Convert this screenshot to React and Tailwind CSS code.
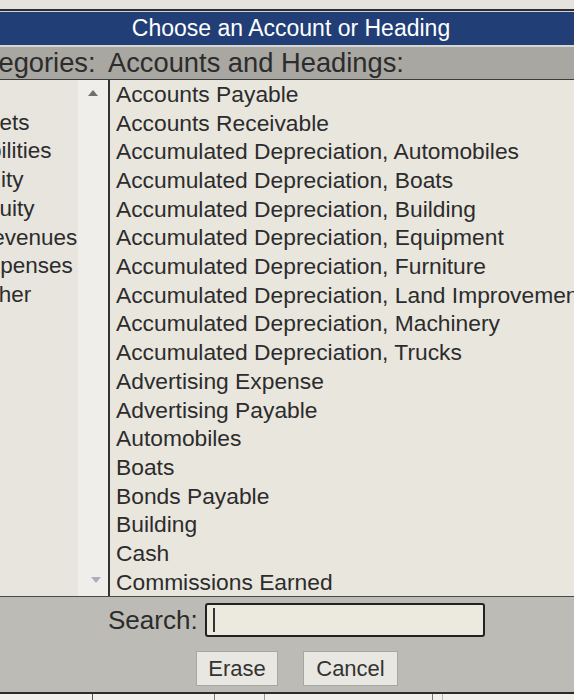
const accounts = [
  "Accounts Payable",
  "Accounts Receivable",
  "Accumulated Depreciation, Automobiles",
  "Accumulated Depreciation, Boats",
  "Accumulated Depreciation, Building",
  "Accumulated Depreciation, Equipment",
  "Accumulated Depreciation, Furniture",
  "Accumulated Depreciation, Land Improvements",
  "Accumulated Depreciation, Machinery",
  "Accumulated Depreciation, Trucks",
  "Advertising Expense",
  "Advertising Payable",
  "Automobiles",
  "Boats",
  "Bonds Payable",
  "Building",
  "Cash",
  "Commissions Earned",
];

// left list is clipped by the window edge, so each name starts off-screen
const categories = [
  { name: "", left: "ml-0" },
  { name: "Assets", left: "ml-[-38px]" },
  { name: "Liabilities", left: "ml-[-41px]" },
  { name: "Equity", left: "ml-[-39px]" },
  { name: "Equity", left: "ml-[-28px]" },
  { name: "Revenues", left: "ml-[-24px]" },
  { name: "Expenses", left: "ml-[-26px]" },
  { name: "Other", left: "ml-[-25px]" },
];

function Row({ children, className = "" }) {
  return (
    <div className={`h-[28.7px] flex items-center whitespace-nowrap leading-none ${className}`}>
      {children}
    </div>
  );
}

export default function App() {
  return (
    <div className="w-[574px] h-[700px] overflow-hidden flex flex-col bg-[#e6e4dd] text-[#2c2c2c] font-['Liberation_Sans',Arial,sans-serif]">
      {/* window top edge */}
      <div className="h-[9px] bg-[#e4e3de]" />
      <div className="h-[2px] bg-[#2e2e30]" />
      <div className="h-[1px] bg-[#c9cfdb]" />

      {/* title bar */}
      <div className="h-[33px] bg-[#223e77] text-white text-[23px] flex items-center justify-center pl-[8px]">
        Choose an Account or Heading
      </div>
      <div className="h-[2px] bg-[#d6d6d2]" />

      {/* column headings */}
      <div className="h-[32px] bg-[#a8a7a1] flex items-center text-[27.3px] whitespace-nowrap leading-none">
        <span className="ml-[-44px] w-[152px] shrink-0">Categories:</span>
        <span>Accounts and Headings:</span>
      </div>
      <div className="h-[1px] bg-[#3c3c3c]" />

      {/* lists */}
      <div className="h-[516px] flex overflow-hidden">
        <div className="w-[78px] shrink-0 overflow-hidden text-[22.5px] bg-[#e7e5de]">
          {categories.map((c, i) => (
            <Row key={i}>
              <span className={c.left}>{c.name}</span>
            </Row>
          ))}
        </div>
        <div className="w-[30px] shrink-0 bg-[#efeeea] flex flex-col justify-between items-center py-[12px]">
          <svg width="10" height="6" viewBox="0 0 10 6" className="mt-[-2px]">
            <path d="M5 0 L10 6 L0 6 Z" fill="#6f6f72" />
          </svg>
          <svg width="10" height="6" viewBox="0 0 10 6" className="ml-[6px] mb-[1px]">
            <path d="M0 0 L10 0 L5 6 Z" fill="#aab0bb" />
          </svg>
        </div>
        <div className="flex-1 border-l-2 border-[#343434] pl-[6px] text-[22.8px] bg-[#e9e6de] overflow-hidden">
          {accounts.map((a) => (
            <Row key={a}>{a}</Row>
          ))}
        </div>
      </div>
      <div className="h-[1px] bg-[#4a4a4a]" />

      {/* search + buttons */}
      <div className="h-[95px] bg-[#bcbbb5] flex flex-col">
        <div className="flex items-center mt-[6px] h-[34px]">
          <span className="ml-[108px] w-[97px] text-[26px] leading-none">Search:</span>
          <div className="w-[280px] h-[34px] border-2 border-[#222] rounded-[3px] bg-[#ece9df] flex items-center pl-[6px]">
            <div className="w-[2px] h-[24px] bg-[#333]" />
          </div>
        </div>
        <div className="flex mt-[14px] ml-[196px] gap-[25px]">
          <button className="w-[82px] h-[35px] bg-[#e9e7e1] border border-[#a6a6a2] text-[22px] leading-none text-[#333]">
            Erase
          </button>
          <button className="w-[95px] h-[35px] bg-[#e9e7e1] border border-[#a6a6a2] text-[22px] leading-none text-[#333]">
            Cancel
          </button>
        </div>
      </div>
      <div className="h-[2px] bg-[#2b2b2b]" />

      {/* next table peeking below */}
      <div className="flex-1 flex bg-[#f1f0ec]">
        <div className="w-[93px] border-r border-[#555]" />
        <div className="w-[122px] border-r border-[#777]" />
        <div className="w-[50px] border-r border-[#999]" />
        <div className="w-[168px] border-r border-[#777]" />
        <div className="w-[10px] border-r border-[#bbb]" />
      </div>
    </div>
  );
}
